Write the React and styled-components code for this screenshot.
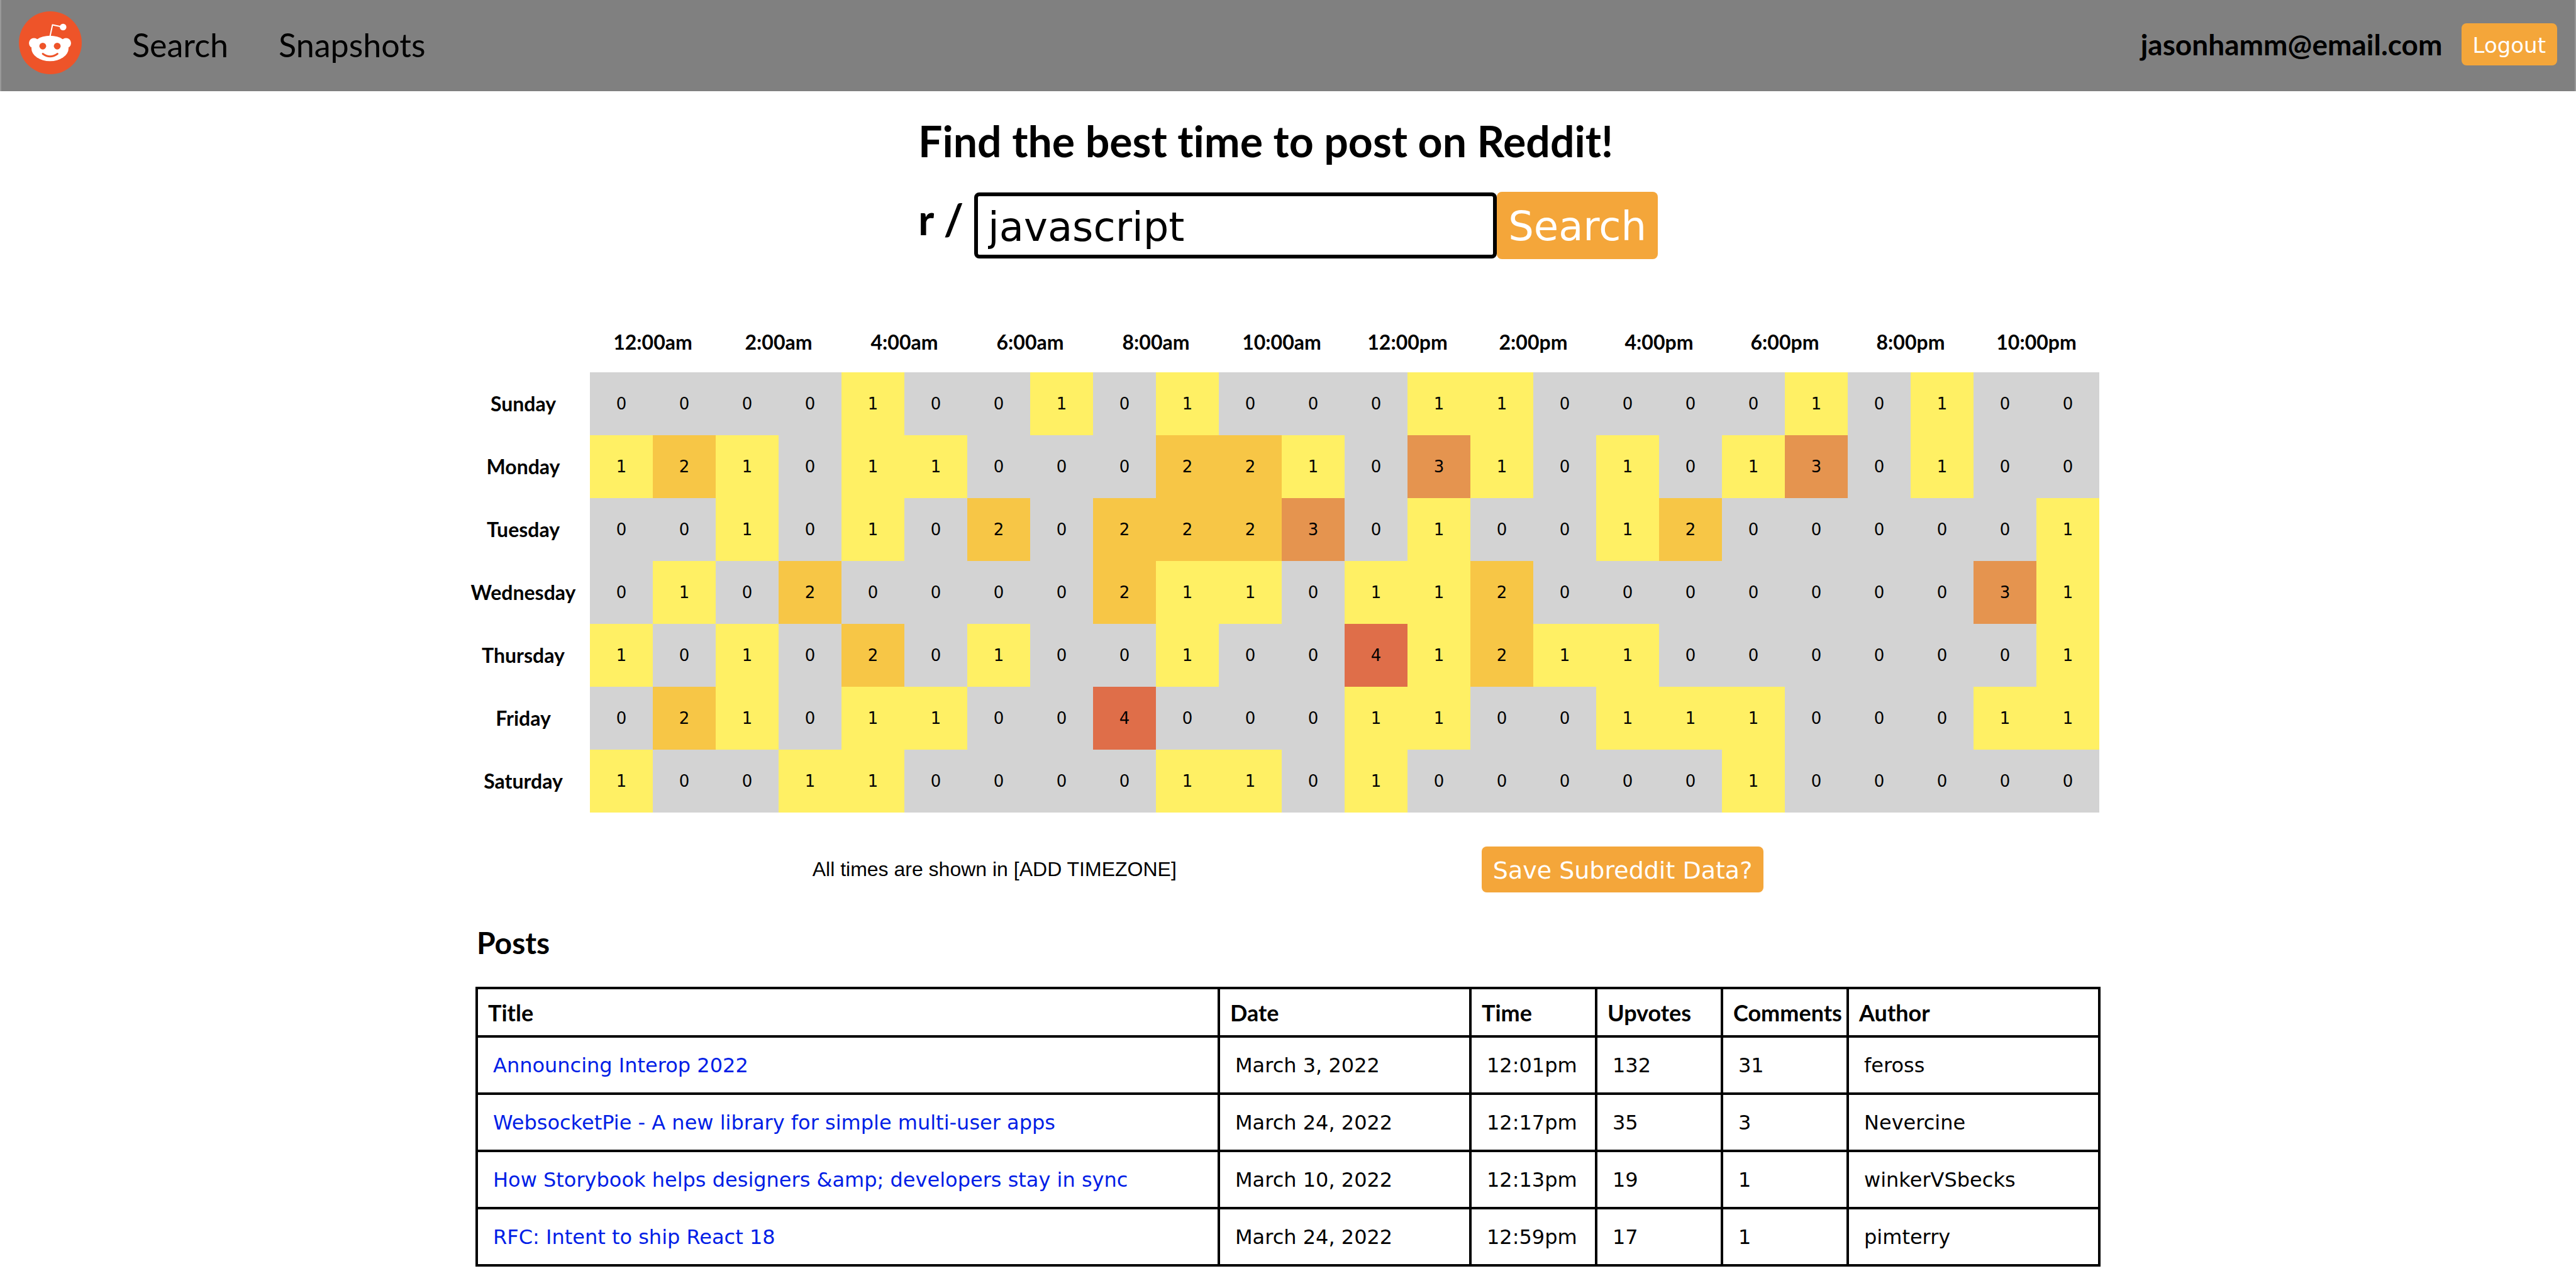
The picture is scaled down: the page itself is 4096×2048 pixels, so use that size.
import React, { useState } from "react";
import styled, { createGlobalStyle } from "styled-components";

const headingFont = `"Trebuchet MS", Lato, "Open Sans", sans-serif`;
const bodyFont = `Verdana, "DejaVu Sans", sans-serif`;
const plainFont = `Helvetica, "Liberation Sans", Arial, sans-serif`;

const GlobalStyle = createGlobalStyle`
  * { box-sizing: border-box; }
  body {
    margin: 0;
    background: #fff;
    color: #000;
    font-family: ${bodyFont};
    font-variant-ligatures: none;
  }
`;

const Header = styled.header`
  display: flex;
  align-items: center;
  justify-content: space-between;
  padding: 18px 28px 22px;
  height: 145px;
  border: solid #999;
  border-width: 0 2px;
  background: #808080;
  font-family: ${headingFont};
`;

const Nav = styled.nav`
  display: flex;
  align-items: center;
  align-self: stretch;
  gap: 80px;
`;

const LogoLink = styled.a`
  display: block;
  align-self: flex-start;
  width: 100px;
  height: 100px;

  svg { display: block; }
`;

const NavLink = styled.a`
  color: #000;
  font-size: 52px;
  line-height: 62px;
  text-decoration: none;
`;

const Account = styled.div`
  display: flex;
  align-items: center;
  gap: 30px;
`;

const Email = styled.span`
  font-size: 46px;
  font-weight: 700;
  line-height: 52px;
`;

const Button = styled.button`
  flex: none;
  padding: 2px 18px 0;
  border: 0;
  border-radius: 8px;
  background: #f4a63a;
  color: #fff;
  font-family: ${bodyFont};
  font-size: ${(p) => p.$size}px;
  height: ${(p) => p.$height}px;
  cursor: pointer;
`;

const Main = styled.main`
  width: 100%;
  max-width: 2580px;
  margin: 0 auto;
  padding: 41px 0 34px;
`;

const Hero = styled.section`
  width: 1176px;
  max-width: 100%;
  margin: 0 auto 84px;
`;

const Title = styled.h1`
  margin: 0 0 43px;
  font-family: ${headingFont};
  font-size: 68px;
  line-height: 76px;
`;

const SearchForm = styled.form`
  display: flex;
`;

const Prefix = styled.label`
  width: 89px;
  font-family: ${headingFont};
  font-size: 68px;
  font-weight: 700;
  line-height: 86px;
`;

const SearchInput = styled.input`
  flex: 1;
  min-width: 0;
  height: 105px;
  margin-top: 1px;
  padding: 4px 16px 0;
  border: 6px solid #000;
  border-radius: 8px;
  outline: none;
  background: #fff;
  font-family: ${bodyFont};
  font-size: 64px;
`;

const HeatTable = styled.table`
  width: calc(100% + 32px);
  margin-left: -32px;
  table-layout: fixed;
  border-collapse: collapse;
`;

const LabelCol = styled.col`
  width: 212px;
`;

const HeatLabel = styled.th`
  height: ${(p) => (p.$head ? 96 : 100)}px;
  padding: 0 0 2px;
  font-family: ${headingFont};
  font-size: 32px;
  font-weight: 700;
`;

const heatColors = ["#d3d3d3", "#fff064", "#f7c646", "#e5944f", "#df6e49"];

const HeatCell = styled.td`
  height: 100px;
  padding: 0;
  background: ${(p) => heatColors[p.$level]};
  font-size: 26px;
  text-align: center;
`;

const SaveBar = styled.div`
  display: flex;
  align-items: center;
  justify-content: center;
  gap: 485px;
  margin: 54px 0 51px;
`;

const TimezoneNote = styled.p`
  margin: 0;
  font-family: ${plainFont};
  font-size: 32px;
`;

const PostsTitle = styled.h2`
  margin: 0 0 41px;
  font-family: ${headingFont};
  font-size: 48px;
  line-height: 58px;
`;

const PostsTable = styled.table`
  width: calc(100% + 4px);
  margin: 0 -2px;
  table-layout: fixed;
  border-collapse: collapse;
`;

const Col = styled.col`
  width: ${(p) => p.$width};
`;

const PostsHead = styled.th`
  height: 77px;
  padding: 0 0 0 16px;
  border: 4px solid #000;
  font-family: ${headingFont};
  font-size: 36px;
  text-align: left;
`;

const PostsCell = styled.td`
  height: 91px;
  padding: 0 0 0 24px;
  border: 4px solid #000;
  font-size: 32px;
`;

const PostLink = styled.a`
  color: #001de6;
  text-decoration: none;
`;

const hours = ["12:00am", "2:00am", "4:00am", "6:00am", "8:00am", "10:00am", "12:00pm", "2:00pm", "4:00pm", "6:00pm", "8:00pm", "10:00pm"];

const week = [
  ["Sunday", "000010010100011000010100"],
  ["Monday", "121011000221031010130100"],
  ["Tuesday", "001010202223010012000001"],
  ["Wednesday", "010200002110112000000031"],
  ["Thursday", "101020100100412110000001"],
  ["Friday", "021011004000110011100011"],
  ["Saturday", "100110000110100000100000"],
].map(([day, counts]) => ({ day, counts: counts.split("").map(Number) }));

const columns = [
  ["Title", "auto"],
  ["Date", "400px"],
  ["Time", "200px"],
  ["Upvotes", "200px"],
  ["Comments", "200px"],
  ["Author", "400px"],
];

const posts = [
  ["Announcing Interop 2022", "March 3, 2022", "12:01pm", 132, 31, "feross"],
  ["WebsocketPie - A new library for simple multi-user apps", "March 24, 2022", "12:17pm", 35, 3, "Nevercine"],
  ["How Storybook helps designers &amp; developers stay in sync", "March 10, 2022", "12:13pm", 19, 1, "winkerVSbecks"],
  ["RFC: Intent to ship React 18", "March 24, 2022", "12:59pm", 17, 1, "pimterry"],
];

function RedditLogo() {
  return (
    <svg width="100" height="100" viewBox="0 0 100 100" aria-hidden="true">
      <circle cx="50" cy="50" r="50" fill="#ee5429" />
      <path d="M49.5 40 L53.5 21.5 L70 25" fill="none" stroke="#fff" strokeWidth="2" strokeLinejoin="round" />
      <circle cx="70.3" cy="25" r="5.3" fill="#fff" />
      <circle cx="24" cy="50.5" r="8" fill="#fff" />
      <circle cx="75" cy="50.5" r="8" fill="#fff" />
      <ellipse cx="49.5" cy="59" rx="29.5" ry="20.2" fill="#fff" />
      <circle cx="38" cy="55.3" r="5.4" fill="#ee5429" />
      <circle cx="61" cy="55.3" r="5.4" fill="#ee5429" />
      <path d="M38 67.5 Q49.5 76 61.5 67.5" fill="none" stroke="#ee5429" strokeWidth="2.8" strokeLinecap="round" />
    </svg>
  );
}

function Heatmap() {
  return (
    <HeatTable>
      <colgroup>
        <LabelCol />
        <col span={24} />
      </colgroup>
      <thead>
        <tr>
          <td />
          {hours.map((hour) => (
            <HeatLabel key={hour} scope="col" colSpan={2} $head>{hour}</HeatLabel>
          ))}
        </tr>
      </thead>
      <tbody>
        {week.map(({ day, counts }) => (
          <tr key={day}>
            <HeatLabel scope="row">{day}</HeatLabel>
            {counts.map((count, hour) => (
              <HeatCell key={hour} $level={count}>{count}</HeatCell>
            ))}
          </tr>
        ))}
      </tbody>
    </HeatTable>
  );
}

function Posts() {
  return (
    <section>
      <PostsTitle>Posts</PostsTitle>
      <PostsTable>
        <colgroup>
          {columns.map(([name, width]) => <Col key={name} $width={width} />)}
        </colgroup>
        <thead>
          <tr>
            {columns.map(([name]) => <PostsHead key={name} scope="col">{name}</PostsHead>)}
          </tr>
        </thead>
        <tbody>
          {posts.map(([title, ...details]) => (
            <tr key={title}>
              <PostsCell><PostLink href="#post">{title}</PostLink></PostsCell>
              {details.map((value, i) => <PostsCell key={i}>{value}</PostsCell>)}
            </tr>
          ))}
        </tbody>
      </PostsTable>
    </section>
  );
}

export default function App() {
  const [subreddit, setSubreddit] = useState("javascript");

  return (
    <>
      <GlobalStyle />
      <Header>
        <Nav>
          <LogoLink href="#home" aria-label="Home"><RedditLogo /></LogoLink>
          <NavLink href="#search">Search</NavLink>
          <NavLink href="#snapshots">Snapshots</NavLink>
        </Nav>
        <Account>
          <Email>jasonhamm@email.com</Email>
          <Button type="button" $size={34} $height={67}>Logout</Button>
        </Account>
      </Header>
      <Main>
        <Hero>
          <Title>Find the best time to post on Reddit!</Title>
          <SearchForm onSubmit={(event) => event.preventDefault()}>
            <Prefix htmlFor="subreddit">r /</Prefix>
            <SearchInput id="subreddit" value={subreddit} onChange={(event) => setSubreddit(event.target.value)} />
            <Button type="submit" $size={64} $height={107}>Search</Button>
          </SearchForm>
        </Hero>
        <Heatmap />
        <SaveBar>
          <TimezoneNote>All times are shown in [ADD TIMEZONE]</TimezoneNote>
          <Button type="button" $size={38} $height={73}>Save Subreddit Data?</Button>
        </SaveBar>
        <Posts />
      </Main>
    </>
  );
}
